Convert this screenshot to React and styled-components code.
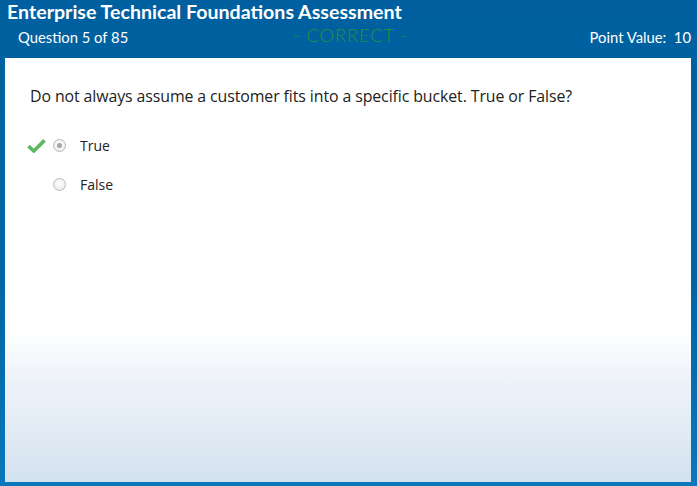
import styled, { createGlobalStyle } from "styled-components";

const Global = createGlobalStyle`
  html, body { margin: 0; padding: 0; }
  body { background: #0a70b2; }
`;

// Outer blue frame
const Frame = styled.div`
  width: 697px;
  height: 486px;
  box-sizing: border-box;
  background: linear-gradient(#00609f 0%, #0066a6 60%, #0a78bb 100%);
  padding: 0 6px 4px 5px;
  display: flex;
  flex-direction: column;
`;

const Header = styled.header`
  height: 58px;
  display: flex;
  flex-direction: column;
  color: #ffffff;
  font-family: "Lato", "Open Sans", sans-serif;
`;

const Title = styled.h1`
  margin: 0;
  padding: 0 0 0 2px;
  font-size: 19.6px;
  font-weight: 700;
  line-height: 23px;
`;

const SubBar = styled.div`
  display: grid;
  grid-template-columns: 1fr auto 1fr;
  align-items: center;
  padding: 4px 0 0 13px;
  font-size: 14.8px;
`;

const Status = styled.span`
  color: #23933a;
  font-size: 18.5px;
  font-weight: 300;
  letter-spacing: 0.8px;
  margin: -3px 8px 0 0;
`;

const Points = styled.span`
  justify-self: end;
`;

const Body = styled.main`
  flex: 1;
  background: linear-gradient(#ffffff 0%, #ffffff 64%, #eef3fa 76%, #d4e2ef 100%);
  padding: 27px 0 0 25px;
  font-family: "Open Sans", "Noto Sans", sans-serif;
  color: #222;
`;

const Question = styled.p`
  margin: 0 0 28px;
  font-size: 15.9px;
  letter-spacing: -0.1px;
`;

const Options = styled.div`
  display: flex;
  flex-direction: column;
  gap: 19px;
`;

const Option = styled.label`
  display: flex;
  align-items: center;
  height: 20px;
  font-size: 14px;
`;

const Mark = styled.span`
  width: 22px;
  display: flex;
  align-items: center;
  margin-left: -3px;
`;

const Radio = styled.span`
  width: 11px;
  height: 11px;
  border-radius: 50%;
  border: 1px solid #b9b9b9;
  background: radial-gradient(circle at 50% 40%, #fff, #e6e6e6);
  display: flex;
  align-items: center;
  justify-content: center;
  margin: 0 14px 0 4px;
  &::after {
    content: "";
    width: 5px;
    height: 5px;
    border-radius: 50%;
    background: ${(p) => (p.$checked ? "#a5a5a5" : "transparent")};
  }
`;

const Check = () => (
  <svg width="19" height="15" viewBox="0 0 19 15">
    <path d="M1.5 8.2 L6.8 13 L17.5 2.4" fill="none" stroke="#5cb860" strokeWidth="3.6" strokeLinejoin="miter" />
  </svg>
);

export default function App() {
  return (
    <>
      <Global />
      <Frame>
        <Header>
          <Title>Enterprise Technical Foundations Assessment</Title>
          <SubBar>
            <span>Question 5 of 85</span>
            <Status>- CORRECT -</Status>
            <Points>Point Value:&nbsp; 10</Points>
          </SubBar>
        </Header>
        <Body>
          <Question>Do not always assume a customer fits into a specific bucket. True or False?</Question>
          <Options>
            <Option>
              <Mark><Check /></Mark>
              <Radio $checked />
              True
            </Option>
            <Option>
              <Mark />
              <Radio />
              False
            </Option>
          </Options>
        </Body>
      </Frame>
    </>
  );
}
